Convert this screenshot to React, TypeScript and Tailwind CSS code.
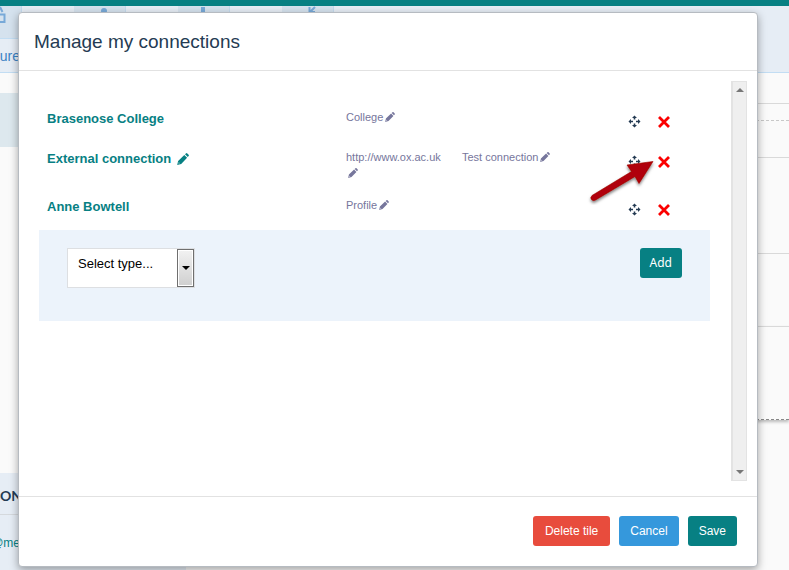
import React from "react";

const arial = "font-['Liberation_Sans',Arial,sans-serif]";

function Pencil({ className = "" }: { className?: string }) {
  return (
    <svg viewBox="0 0 12 12" className={`block shrink-0 ${className}`} fill="currentColor" aria-hidden="true">
      <path d="M8 1.200 8.900.4Q9.600-.2 10.300.4L11.600 1.700Q12.200 2.400 11.600 3.100L10.800 4ZM7.300 1.900 10.100 4.700 4.200 10.900.2 11.900 1.100 7.900ZM1.800 9.200 1.500 10.500 2.800 10.200Z" fillRule="evenodd" />
    </svg>
  );
}

function MoveIcon() {
  return (
    <svg viewBox="0 0 13 13" className="size-[13px]" fill="#243b53" aria-hidden="true">
      <path d="M6.500.5 9 3H7.300V4.500H5.700V3H4ZM6.500 12.500 4 10h1.700V8.500h1.600V10H9ZM.5 6.500 3 4v1.700h2v1.600H3V9ZM12.500 6.500 10 9V7.300H8V5.700h2V4Z" />
    </svg>
  );
}

function RemoveIcon() {
  return (
    <svg viewBox="0 0 12 12" className="h-3 w-3" fill="none" stroke="#fb0000" strokeWidth="2.800" aria-hidden="true">
      <path d="M1 1 11 11M11 1 1 11" />
    </svg>
  );
}

const header = [
  { mark: "lock", lead: "w-[22px]" },
  { mark: "dot", lead: "w-[52px]" },
  { mark: "bar", lead: "w-[52px]" },
  { mark: "arrow", lead: "w-[52px]" },
];

function NavMark({ mark }: { mark: string }) {
  return (
    <svg viewBox="0 0 52 32" className="h-8 w-[52px] shrink-0" fill="none" stroke="#78a9d8" aria-hidden="true">
      {mark === "lock" && <path d="M29 8.500H35.500V16H29M31 1 33.500 6" strokeWidth="2" />}
      {mark === "dot" && <circle cx="31" cy="5" r="3" fill="#78a9d8" stroke="none" />}
      {mark === "bar" && <path d="M26 1V16" strokeWidth="4" />}
      {mark === "arrow" && <path d="M28.500 1V6H34M29 6 34 1" strokeWidth="2" />}
    </svg>
  );
}

function Backdrop() {
  return (
    <div className="flex h-screen flex-col bg-[#fafafa]" aria-hidden="true">
      <div className="h-1.5 shrink-0 bg-[#078083]" />
      <div className="h-[67px] shrink-0 border-b border-[#c2ddf3] bg-[#e6edf5]">
        <div className="flex h-8 gap-[52px]">
          {header.map((h) => (
            <div key={h.mark} className={`${h.lead} flex justify-end overflow-hidden border-r border-[#c4dbee] bg-[#d5e2ee]`}>
              <NavMark mark={h.mark} />
            </div>
          ))}
        </div>
        <div className={`${arial} flex h-[34px] w-5 items-center justify-end border-t border-[#c2ddf3] text-sm text-[#3b82c4]`}>
          ure
        </div>
      </div>
      <div className="flex min-h-0 flex-1">
        <div className="flex w-[186px] shrink-0 flex-col pt-5">
          <div className="h-[54px] shrink-0 bg-[#dde8ee]" />
          <div className="flex-1" />
          <div className="h-[97px] shrink-0 bg-[#e6edf5]">
            <div className="flex h-[42px] items-center border-b border-[#d5d9dd] pt-1 font-['Lato',sans-serif] text-sm font-bold text-[#243b53]">
              ON
            </div>
            <div className={`${arial} flex h-[55px] w-5 items-center justify-end text-xs text-[#078083]`}>@me</div>
          </div>
        </div>
        <div className="flex-1 pt-[30px]">
          <div className="h-[17px] border-t border-[#d9d9d9]" />
          <div className="h-[37px] border-t border-dashed border-[#c8c8c8]" />
          <div className="h-24 border-t border-[#d9d9d9]" />
          <div className="h-[73px] border-t border-[#d9d9d9]" />
          <div className="h-[94px] border-t border-[#d9d9d9] shadow-[0_2px_3px_#bbbbbb] [border-bottom:1px_dashed_#888888]" />
        </div>
      </div>
    </div>
  );
}

type Detail = { text: string; width: string };
const connections: { name: string; editable?: boolean; height: string; details: Detail[] }[] = [
  { name: "Brasenose College", height: "h-10", details: [{ text: "College", width: "w-full" }] },
  {
    name: "External connection",
    editable: true,
    height: "h-12",
    details: [
      { text: "http://www.ox.ac.uk", width: "w-[102px]" },
      { text: "Test connection", width: "w-[100px]" },
    ],
  },
  { name: "Anne Bowtell", height: "h-11", details: [{ text: "Profile", width: "w-full" }] },
];

function Rows() {
  return (
    <ul>
      {connections.map((c) => (
        <li key={c.name} className={`${c.height} grid grid-cols-[299fr_282fr_82fr] items-start pl-2`}>
          <div className="flex items-center gap-1.5 pt-[13px] text-[13px] leading-4 font-bold text-[#078083]">
            {c.name}
            {c.editable && (
              <button type="button" aria-label="Edit name">
                <Pencil className="size-3" />
              </button>
            )}
          </div>
          <div className="flex items-start gap-3.5 pt-[11px] text-[11px] leading-4 text-[#76769c]">
            {c.details.map((d) => (
              <div key={d.text} className={`${d.width} flex flex-wrap items-center`}>
                {d.text}
                <button type="button" aria-label={`Edit ${d.text}`} className="flex h-4 items-center pl-0.5">
                  <Pencil className="size-2.5" />
                </button>
              </div>
            ))}
          </div>
          <div className="flex items-center gap-[17px] pt-[17px]">
            <button type="button" aria-label={`Move ${c.name}`}><MoveIcon /></button>
            <button type="button" aria-label={`Remove ${c.name}`}><RemoveIcon /></button>
          </div>
        </li>
      ))}
    </ul>
  );
}

const btn = "h-[30px] rounded-[3px] text-xs text-white";

export default function App() {
  return (
    <div className={`${arial} relative h-screen overflow-hidden`}>
      <Backdrop />
      <div className="absolute inset-0 pt-3 pr-[31px] pb-[3px] pl-[18px]">
        <section
          role="dialog"
          aria-labelledby="title"
          className="flex h-full flex-col rounded-[4px] border border-[#b6bbc1] bg-white shadow-[0_3px_9px_rgba(0,0,0,0.35)]"
        >
          <header className="flex h-[58px] shrink-0 items-center border-b border-[#e2e2e2] px-[15px]">
            <h1 id="title" className="text-[19px] leading-6 text-[#243b53]">Manage my connections</h1>
          </header>

          <div className="flex min-h-0 flex-1 pt-2.5 pr-2.5 pb-[15px] pl-5">
            <div className="relative flex-1 pt-[17px] pr-[21px]">
              <Rows />
              <div className="flex h-[91px] items-start justify-between bg-[#ecf3fb] pt-[18px] pr-7 pl-7">
                <div className="relative">
                  <label htmlFor="type" className="sr-only">Type</label>
                  <select
                    id="type"
                    className="block h-10 w-32 appearance-none border border-[#dddfe2] bg-white pr-5 pb-2 pl-2.5 text-[13px] text-black"
                  >
                    <option>Select type...</option>
                  </select>
                  <span className="pointer-events-none absolute top-px right-px bottom-px flex w-[17px] items-center justify-center border border-[#6f6f6f] bg-linear-to-b from-[#f2f2f2] to-[#cfcfcf] shadow-[inset_0_0_0_1px_#ffffff]">
                    <svg viewBox="0 0 8 4" className="h-1 w-2" aria-hidden="true"><path d="M0 0H8L4 4Z" /></svg>
                  </span>
                </div>
                <button type="button" className={`${btn} bg-[#078083] px-2.5 font-['Noto_Sans',sans-serif]`}>Add</button>
              </div>
              <svg viewBox="0 0 72 50" className="pointer-events-none absolute top-[74px] right-[72px] h-[50px] w-[72px]" aria-hidden="true">
                <defs>
                  <filter id="soft" x="-20%" y="-20%" width="140%" height="150%">
                    <feDropShadow dx="0" dy="2" stdDeviation="1.500" floodColor="#000000" floodOpacity="0.5" />
                  </filter>
                </defs>
                <path d="M5 40.500Q3 42.500 4.500 44.500 6 46.500 8.500 45L48 21.500 52 28.500 66 6.500 40 10 44.500 16.500Z" fill="#b00507" stroke="#9c0406" strokeWidth=".6" filter="url(#soft)" />
              </svg>
            </div>
            <div className="flex w-4 flex-col items-center justify-between border border-l-2 border-[#e3e3e3] bg-[#efefef] py-1.5" aria-hidden="true">
              <svg viewBox="0 0 8 4" className="h-1 w-2"><path d="M4 0 8 4H0Z" fill="#777" /></svg>
              <svg viewBox="0 0 8 4" className="h-1 w-2"><path d="M0 0H8L4 4Z" fill="#777" /></svg>
            </div>
          </div>

          <footer className="flex h-[70px] shrink-0 items-center justify-end gap-[9px] border-t border-[#e2e2e2] pr-5 pb-0.5">
            <button type="button" className={`${btn} bg-[#e84c3d] px-3`}>Delete tile</button>
            <button type="button" className={`${btn} bg-[#3598dc] px-[11px]`}>Cancel</button>
            <button type="button" className={`${btn} bg-[#078083] px-[11px]`}>Save</button>
          </footer>
        </section>
      </div>
    </div>
  );
}
